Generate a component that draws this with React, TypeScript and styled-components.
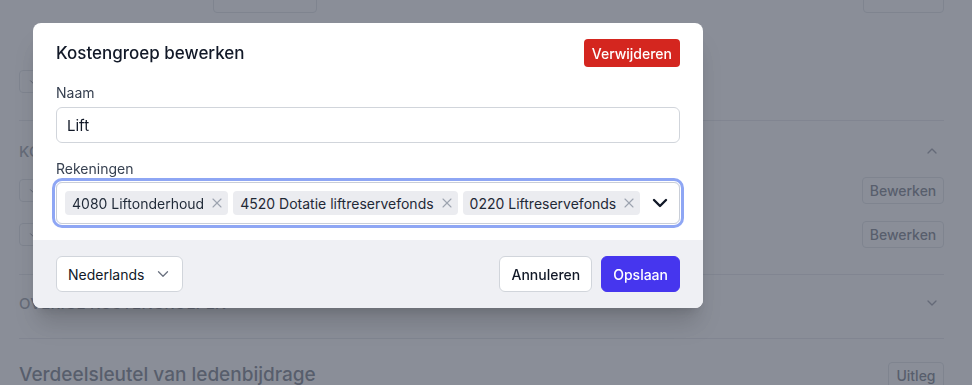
import React from "react";
import styled, { createGlobalStyle } from "styled-components";
import { ChevronDown, ChevronUp, X } from "lucide-react";

const accounts = ["4080 Liftonderhoud", "4520 Dotatie liftreservefonds", "0220 Liftreservefonds"];

const App = () => {
  return (
    <>
      <GlobalStyle />
      <Page>
        <TopRow>
          <GhostButton $width={104} />
          <GhostButton $width={81} $push />
        </TopRow>
        <ListRow $top={57} $height={23}>
          <MiniSelect>
            <ChevronDown size={10} />
          </MiniSelect>
        </ListRow>
        <Divider $top={27} />
        <SectionHead $top={10}>
          <SectionTitle>Kostengroepen</SectionTitle>
          <ChevronUp size={16} color="#6b7280" />
        </SectionHead>
        <ListRow $top={6}>
          <MiniSelect>
            <ChevronDown size={10} />
          </MiniSelect>
          <GhostButton $width={82} $push>
            Bewerken
          </GhostButton>
        </ListRow>
        <ListRow $top={17}>
          <MiniSelect>
            <ChevronDown size={10} />
          </MiniSelect>
          <GhostButton $width={82} $push>
            Bewerken
          </GhostButton>
        </ListRow>
        <Divider $top={26} />
        <SectionHead $top={8}>
          <SectionTitle>Overige kostengroepen</SectionTitle>
          <ChevronDown size={16} color="#6b7280" />
        </SectionHead>
        <Divider $top={15} />
        <BigRow>
          <BigTitle>Verdeelsleutel van ledenbijdrage</BigTitle>
          <GhostButton $width={56} $push>
            Uitleg
          </GhostButton>
        </BigRow>
      </Page>

      <Overlay>
        <Modal>
          <Body>
            <Header>
              <Title>Kostengroep bewerken</Title>
              <DangerButton>Verwijderen</DangerButton>
            </Header>
            <Field>
              <Label>Naam</Label>
              <TextInput defaultValue="Lift" />
            </Field>
            <Field>
              <Label $gap={3}>Rekeningen</Label>
              <MultiBox>
                {accounts.map((a) => (
                  <Chip key={a}>
                    {a}
                    <X size={16} strokeWidth={1.6} color="#9ca3af" />
                  </Chip>
                ))}
                <Caret>
                  <ChevronDown size={24} strokeWidth={2.4} color="#111827" />
                </Caret>
              </MultiBox>
            </Field>
          </Body>
          <Footer>
            <LangSelect>
              Nederlands
              <ChevronDown size={18} strokeWidth={1.75} color="#6b7280" />
            </LangSelect>
            <Actions>
              <Button>Annuleren</Button>
              <Button $primary>Opslaan</Button>
            </Actions>
          </Footer>
        </Modal>
      </Overlay>
    </>
  );
};

export default App;

const GlobalStyle = createGlobalStyle`
  html, body {
    margin: 0;
    padding: 0;
    background: #fff;
  }
  body {
    font-family: Inter, "Noto Sans", sans-serif;
    color: #111827;
    -webkit-font-smoothing: antialiased;
  }
  * {
    box-sizing: border-box;
  }
`;

const Page = styled.div`
  height: 385px;
  overflow: hidden;
  padding: 0 28px 0 19px;
`;

const TopRow = styled.div`
  display: flex;
  align-items: flex-end;
  height: 13px;
  padding-left: 194px;
`;

const GhostButton = styled.div<{ $width: number; $push?: boolean }>`
  flex: none;
  width: ${(p) => p.$width}px;
  height: 27px;
  margin-left: ${(p) => (p.$push ? "auto" : "0")};
  border: 1px solid #d1d5db;
  border-radius: 4px;
  display: flex;
  align-items: center;
  justify-content: center;
  font-size: 14px;
  font-weight: 500;
  color: #374151;
`;

const ListRow = styled.div<{ $top: number; $height?: number }>`
  display: flex;
  align-items: center;
  height: ${(p) => p.$height ?? 27}px;
  margin-top: ${(p) => p.$top}px;
`;

const MiniSelect = styled.div`
  width: 40px;
  height: 23px;
  border: 1px solid #d1d5db;
  border-radius: 4px;
  display: flex;
  align-items: center;
  padding-left: 8px;
  color: #374151;
`;

const Divider = styled.div<{ $top: number }>`
  height: 1px;
  background: #d9dce1;
  margin-top: ${(p) => p.$top}px;
`;

const SectionHead = styled.div<{ $top: number }>`
  display: flex;
  align-items: center;
  justify-content: space-between;
  height: 40px;
  margin-top: ${(p) => p.$top}px;
  padding-right: 4px;
`;

const SectionTitle = styled.div`
  font-size: 15px;
  font-weight: 500;
  text-transform: uppercase;
  letter-spacing: 0.02em;
  color: #6b7280;
`;

const BigRow = styled.div`
  display: flex;
  align-items: flex-start;
  margin-top: 23px;
`;

const BigTitle = styled.div`
  font-size: 19px;
  font-weight: 500;
  line-height: 26px;
  color: #374151;
`;

const Overlay = styled.div`
  position: fixed;
  inset: 0;
  background: rgba(99, 104, 117, 0.75);
  display: flex;
  align-items: flex-start;
  padding: 23px 0 0 33px;
`;

const Modal = styled.div`
  width: 670px;
  background: #fff;
  border-radius: 8px;
  overflow: hidden;
  box-shadow: 0 20px 25px -5px rgba(0, 0, 0, 0.16), 0 8px 10px -6px rgba(0, 0, 0, 0.12);
`;

const Body = styled.div`
  padding: 16px 23px 16px;
`;

const Header = styled.div`
  display: flex;
  align-items: center;
  justify-content: space-between;
  height: 28px;
`;

const Title = styled.h2`
  margin: 0;
  font-size: 17px;
  font-weight: 500;
  color: #111827;
`;

const DangerButton = styled.button`
  height: 28px;
  padding: 0 8px;
  border: none;
  border-radius: 4px;
  background: #d4261f;
  color: #fff;
  font-family: inherit;
  font-size: 14px;
  font-weight: 500;
`;

const Field = styled.div`
  margin-top: 16px;
`;

const Label = styled.div<{ $gap?: number }>`
  font-size: 14px;
  line-height: 20px;
  color: #374151;
  margin-bottom: ${(p) => p.$gap ?? 4}px;
`;

const TextInput = styled.input`
  display: block;
  width: 100%;
  height: 36px;
  padding: 0 10px;
  border: 1px solid #d1d5db;
  border-radius: 6px;
  font-family: inherit;
  font-size: 15px;
  color: #111827;
  outline: none;
`;

const MultiBox = styled.div`
  display: flex;
  align-items: center;
  gap: 5px;
  height: 42px;
  padding: 0 7px 0 8px;
  border: 1px solid #c9ced8;
  border-radius: 6px;
  box-shadow: 0 0 0 1px #fff, 0 0 0 4px #8ea6f4;
`;

const Chip = styled.span`
  display: inline-flex;
  align-items: center;
  gap: 5px;
  height: 24px;
  padding: 0 3px 0 7px;
  border-radius: 4px;
  background: #ebecf0;
  font-size: 14px;
  color: #1f2937;
  white-space: nowrap;
`;

const Caret = styled.span`
  display: flex;
  margin-left: auto;
`;

const Footer = styled.div`
  display: flex;
  align-items: center;
  justify-content: space-between;
  height: 68px;
  padding: 0 23px;
  background: #eff0f4;
`;

const LangSelect = styled.div`
  width: 127px;
  height: 36px;
  display: flex;
  align-items: center;
  justify-content: space-between;
  padding: 0 10px 0 11px;
  background: #fff;
  border: 1px solid #d1d5db;
  border-radius: 6px;
  font-size: 14px;
  color: #111827;
`;

const Actions = styled.div`
  display: flex;
  gap: 9px;
`;

const Button = styled.button<{ $primary?: boolean }>`
  height: 36px;
  padding: 0 11px;
  border-radius: 6px;
  border: 1px solid ${(p) => (p.$primary ? "#4636ee" : "#d1d5db")};
  background: ${(p) => (p.$primary ? "#4636ee" : "#fff")};
  color: ${(p) => (p.$primary ? "#fff" : "#111827")};
  font-family: inherit;
  font-size: 14px;
  font-weight: 500;
`;
